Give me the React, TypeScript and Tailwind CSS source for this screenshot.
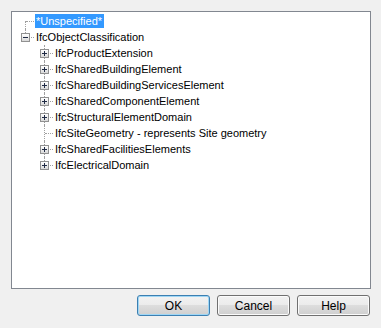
import React from 'react';

type VLine = 'none' | 'full' | 'top' | 'bottom';

interface Row {
    label: string;
    level: number;
    box?: 'plus' | 'minus';
    vline: VLine;
    selected?: boolean;
}

const rows: Row[] = [
    { label: '*Unspecified*', level: 0, vline: 'bottom', selected: true },
    { label: 'IfcObjectClassification', level: 0, box: 'minus', vline: 'top' },
    { label: 'IfcProductExtension', level: 1, box: 'plus', vline: 'full' },
    { label: 'IfcSharedBuildingElement', level: 1, box: 'plus', vline: 'full' },
    { label: 'IfcSharedBuildingServicesElement', level: 1, box: 'plus', vline: 'full' },
    { label: 'IfcSharedComponentElement', level: 1, box: 'plus', vline: 'full' },
    { label: 'IfcStructuralElementDomain', level: 1, box: 'plus', vline: 'full' },
    { label: 'IfcSiteGeometry - represents Site geometry', level: 1, vline: 'full' },
    { label: 'IfcSharedFacilitiesElements', level: 1, box: 'plus', vline: 'full' },
    { label: 'IfcElectricalDomain', level: 1, box: 'plus', vline: 'top' },
];

// one indentation column of the tree, with its dotted connectors
function Guide({ vline, box, connect }: { vline: VLine; box?: 'plus' | 'minus'; connect: boolean }) {
    return (
        <div className="relative w-[19px] h-4 shrink-0">
            {vline === 'full' && (
                <div className="absolute left-[9px] top-0 bottom-0 border-l border-dotted border-[#a0a0a0]" />
            )}
            {vline === 'top' && (
                <div className="absolute left-[9px] top-0 h-[8px] border-l border-dotted border-[#a0a0a0]" />
            )}
            {vline === 'bottom' && (
                <div className="absolute left-[9px] top-[8px] bottom-0 border-l border-dotted border-[#a0a0a0]" />
            )}
            {connect && (
                <div className="absolute left-[10px] right-[1px] top-[8px] border-t border-dotted border-[#a0a0a0]" />
            )}
            {box && (
                <div className="absolute left-[5px] top-[4px] w-[9px] h-[9px] border border-[#919191] bg-[linear-gradient(#ffffff,#d9d9d9)]">
                    <div className="absolute left-[1px] top-[3px] w-[5px] h-px bg-[#1f2a44]" />
                    {box === 'plus' && <div className="absolute left-[3px] top-[1px] w-px h-[5px] bg-[#1f2a44]" />}
                </div>
            )}
        </div>
    );
}

function Button({ label, primary }: { label: string; primary?: boolean }) {
    return (
        <button
            className={
                primary
                    ? 'w-[73px] h-[21px] rounded-[3px] border border-[#3c7fb1] shadow-[inset_0_0_0_1px_#9ed6f5] bg-[linear-gradient(#f2f2f2,#ebebeb_50%,#dddddd_50%,#cfcfcf)] text-[12px] text-black flex items-center justify-center'
                    : 'w-[73px] h-[21px] rounded-[3px] border border-[#707070] shadow-[inset_0_0_0_1px_#fbfbfb] bg-[linear-gradient(#f2f2f2,#ebebeb_50%,#dddddd_50%,#cfcfcf)] text-[12px] text-black flex items-center justify-center'
            }
        >
            {label}
        </button>
    );
}

export default function App() {
    return (
        <div
            className="w-[381px] h-[328px] bg-[#f0f0f0] pl-[11px] pr-[10px] pt-[11px] flex flex-col"
            style={{ fontFamily: '"Liberation Sans", Arial, sans-serif' }}
        >
            {/* Tree view */}
            <div className="h-[278px] border border-[#828790] bg-white pl-[4px] pt-px flex flex-col">
                {rows.map((row, i) => (
                    <div key={i} className="h-4 flex items-center">
                        {row.level === 1 && <Guide vline="none" connect={false} />}
                        <Guide vline={row.vline} box={row.box} connect />
                        <span
                            className={`h-[14px] leading-[14px] pl-px pr-[2px] text-[11px] whitespace-nowrap ${
                                row.selected ? 'bg-[#3399ff] text-white' : 'text-black'
                            }`}
                        >
                            {row.label}
                        </span>
                    </div>
                ))}
            </div>

            {/* Buttons */}
            <div className="flex justify-end gap-[7px] mt-[6px] mr-px">
                <Button label="OK" primary />
                <Button label="Cancel" />
                <Button label="Help" />
            </div>
        </div>
    );
}
